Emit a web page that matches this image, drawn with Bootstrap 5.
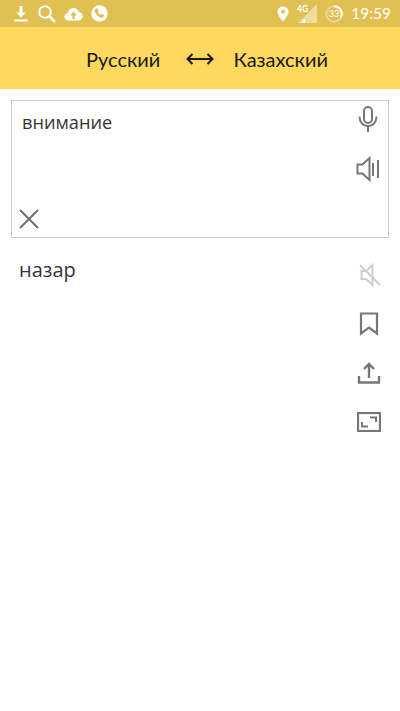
<!DOCTYPE html>
<html lang="ru">
<head>
  <meta charset="UTF-8" />
  <meta name="viewport" content="width=device-width, initial-scale=1.0" />
  <title>Переводчик</title>
  <link href="https://cdn.jsdelivr.net/npm/bootstrap@5.3.2/dist/css/bootstrap.min.css" rel="stylesheet">
  <style>
    body { background: #fff; font-family: Lato, "Open Sans", sans-serif; overflow: hidden; }
    .status-strip { height: 27px; background: #e0c053; color: #fff; padding: 0 9px 0 13px; }
    .status-strip svg { display: block; }
    .status-time { font-family: Lato, sans-serif; font-size: 15.5px; line-height: 1; margin-left: 8px; }
    .lang-bar { height: 62px; background: #ffd95f; color: #1a1a1a; font-size: 20px; padding: 1px 0 0 14px; }
    .lang-arrow { margin: 0 19px 0 26px; }
    .source-box { margin: 11px 11px 0; height: 138px; border: 1px solid #ccc; padding: 0 8px 0 10px; }
    .source-text { font-family: "Open Sans", sans-serif; font-size: 18.2px; line-height: 27px; color: #333; padding-top: 8px; }
    .clear-icon { margin: 0 0 8px -3px; }
    .speak-icon { margin-top: 23px; }
    .side-icons svg { display: block; }
    .result-row { padding: 12.5px 19px 0 19px; }
    .result-text { font-family: "Open Sans", sans-serif; font-size: 20px; line-height: 27px; color: #333; padding-top: 5.5px; }
    .icon-slot { height: 49px; }
  </style>
  <script src="https://cdn.jsdelivr.net/npm/bootstrap@5.3.2/dist/js/bootstrap.bundle.min.js"></script>
</head>
<body>
  <div class="status-strip d-flex align-items-center justify-content-between">
    <div class="d-flex align-items-center">
      <svg width="16" height="18" viewBox="0 0 16 18" fill="#fff"><path d="M6.5 1h3v6.5h3L8 12.5 3.500 7.500h3z"/><rect x="1.500" y="14.500" width="13" height="2"/></svg>
      <svg class="ms-2" width="19" height="19" viewBox="0 0 19 19" fill="none" stroke="#fff"><circle cx="8" cy="8" r="5.800" stroke-width="2"/><path d="M12.500 12.500 18 18" stroke-width="2.600"/></svg>
      <svg class="ms-2" width="19" height="14" viewBox="0 0 19 14"><path fill="#fff" d="M4.500 13.500C2 13.500.5 11.800.5 9.800c0-1.900 1.400-3.300 3.100-3.500C4.200 3.200 6.500 1 9.500 1c2.600 0 4.700 1.700 5.400 4.100 2.200.2 3.700 2 3.700 4.100 0 2.400-1.800 4.300-4.200 4.300z"/><path fill="#e0c053" d="M9.500 4.500 13 8.500h-2.300v3.500H8.300V8.500H6z"/></svg>
      <svg class="ms-2" width="17" height="17" viewBox="0 0 17 17"><circle cx="8.500" cy="8.500" r="8.200" fill="#fff"/><path fill="#e0c053" d="M4.200 4.300 6 3l1.700 2.700-1 1c.5 1.400 1.500 2.500 3 3.100l1-1 2.600 1.700-1.300 1.900c-.5.500-1.500.6-2.300.3C6.900 11.700 5 9.800 4 7c-.3-1-.3-2 .2-2.700z"/></svg>
    </div>
    <div class="d-flex align-items-center">
      <svg width="12" height="16" viewBox="0 0 12 16"><path fill="#fff" d="M6 .5C2.800.5.500 2.900.5 5.800.5 9.500 6 15.500 6 15.500s5.500-6 5.500-9.700C11.500 2.900 9.200.5 6 .5z"/><circle cx="6" cy="5.800" r="2" fill="#e0c053"/></svg>
      <svg class="ms-2" width="20" height="19" viewBox="0 0 20 19"><path fill="#f0dc9c" d="M20 0v19H1z"/><path fill="#fff" d="M8 14.500V19H3.500z"/><text x="0" y="8" font-size="8.500" font-family="Lato, sans-serif" font-weight="700" fill="#fff">4G</text></svg>
      <svg class="ms-2" width="18" height="18" viewBox="0 0 18 18"><circle cx="9" cy="9" r="7.700" fill="none" stroke="#ebd68e" stroke-width="2"/><path d="M9 1.300a7.700 7.700 0 0 1 6.800 11.300" fill="none" stroke="#fff" stroke-width="2"/><text x="9" y="12.300" text-anchor="middle" font-size="9" font-family="Lato, sans-serif" fill="#fff">33</text></svg>
      <span class="status-time">19:59</span>
    </div>
  </div>

  <div class="lang-bar d-flex align-items-center justify-content-center">
    <span>Русский</span>
    <svg class="lang-arrow" width="28" height="12" viewBox="0 0 28 12" fill="none" stroke="#1a1a1a" stroke-width="2"><path d="M1.500 6h25M6.500 1 1.500 6l5 5M21.500 1l5 5-5 5"/></svg>
    <span>Казахский</span>
  </div>

  <div class="source-box d-flex justify-content-between">
    <div class="d-flex flex-column justify-content-between align-items-start flex-grow-1">
      <div class="source-text">внимание</div>
      <svg class="clear-icon" width="20" height="20" viewBox="0 0 20 20" fill="none" stroke="#6f6f6f" stroke-width="2"><path d="M1 1l18 18M19 1 1 19"/></svg>
    </div>
    <div class="side-icons d-flex flex-column align-items-center pt-1">
      <svg width="22" height="28" viewBox="0 0 22 28" fill="none" stroke="#777" stroke-width="2"><rect x="7" y="2" width="8" height="16" rx="4"/><path d="M2.500 11.500c0 5.500 3.500 9.500 8.500 9.500s8.500-4 8.500-9.500M11 21v6"/></svg>
      <svg class="speak-icon" width="24" height="26" viewBox="0 0 24 26" fill="none" stroke="#777" stroke-width="2"><path d="M1.500 8.500h5L13.500 2v22l-7-6.500h-5z"/><path d="M17 7v13M22 4v18"/></svg>
    </div>
  </div>

  <div class="result-row d-flex justify-content-between">
    <div class="result-text">назар</div>
    <div class="side-icons d-flex flex-column align-items-center">
      <div class="icon-slot d-flex align-items-center"><svg width="24" height="26" viewBox="0 0 24 26" fill="none" stroke="#cfcfcf" stroke-width="2"><path d="M4.500 9h4.500L15.500 3v20l-6.500-6H4.500z"/><path d="M3 3l20 20"/></svg></div>
      <div class="icon-slot d-flex align-items-center"><svg width="20" height="24" viewBox="0 0 20 24" fill="none" stroke="#777" stroke-width="2.200"><path d="M2 1.500h16v20l-8-6-8 6z"/></svg></div>
      <div class="icon-slot d-flex align-items-center"><svg width="24" height="22" viewBox="0 0 24 22" fill="none" stroke="#777" stroke-width="2.400"><path d="M12 16V2M7 7l5-5 5 5M2 14v6.500h20V14"/></svg></div>
      <div class="icon-slot d-flex align-items-center"><svg width="24" height="20" viewBox="0 0 24 20" fill="none" stroke="#777" stroke-width="2"><rect x="1" y="1" width="22" height="18" stroke-width="2.200"/><path d="M13 5.500h6v4.500M11 14.500H5V10"/></svg></div>
    </div>
  </div>
</body>
</html>
